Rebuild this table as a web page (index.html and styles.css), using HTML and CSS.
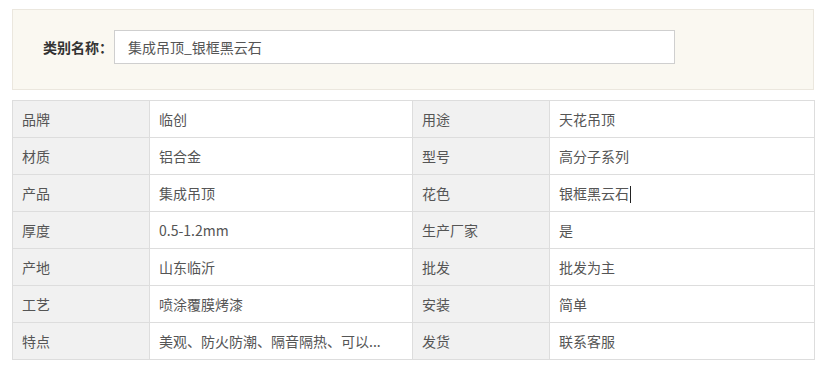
FILE: index.html
```html
<!DOCTYPE html>
<html lang="zh">
<head>
<meta charset="utf-8">
<link rel="stylesheet" href="styles.css">
</head>
<body>
<div class="page">
  <div class="panel">
    <label class="panel-label">类别名称：</label>
    <div class="panel-input">集成吊顶_银框黑云石</div>
  </div>
  <table class="attrs">
    <colgroup>
      <col class="c-label"><col class="c-value"><col class="c-label"><col class="c-value2">
    </colgroup>
    <tr><td class="k">品牌</td><td class="v">临创</td><td class="k">用途</td><td class="v">天花吊顶</td></tr>
    <tr><td class="k">材质</td><td class="v">铝合金</td><td class="k">型号</td><td class="v">高分子系列</td></tr>
    <tr><td class="k">产品</td><td class="v">集成吊顶</td><td class="k">花色</td><td class="v">银框黑云石<span class="caret"></span></td></tr>
    <tr><td class="k">厚度</td><td class="v">0.5-1.2mm</td><td class="k">生产厂家</td><td class="v">是</td></tr>
    <tr><td class="k">产地</td><td class="v">山东临沂</td><td class="k">批发</td><td class="v">批发为主</td></tr>
    <tr><td class="k">工艺</td><td class="v">喷涂覆膜烤漆</td><td class="k">安装</td><td class="v">简单</td></tr>
    <tr><td class="k">特点</td><td class="v">美观、防火防潮、隔音隔热、可以...</td><td class="k">发货</td><td class="v">联系客服</td></tr>
  </table>
</div>
</body>
</html>
```

FILE: styles.css
```css
* { box-sizing: border-box; }
html, body { margin: 0; padding: 0; background: #fff; }
body {
  font-family: "Microsoft YaHei", "Noto Sans CJK SC", "Noto Sans", sans-serif;
  font-size: 14px;
  color: #444;
}
.page {
  padding: 9px 0 0 12px;
  width: 814px;
}
.panel {
  height: 81px;
  background: #faf8f1;
  border: 1px solid #ebe7de;
  display: flex;
  align-items: flex-start;
  padding: 20px 0 0 30px;
}
.panel-label {
  font-weight: bold;
  font-size: 14px;
  color: #333;
  width: 71px;
  line-height: 34px;
}
.panel-input {
  width: 561px;
  height: 34px;
  background: #fff;
  border: 1px solid #cfcfcf;
  padding: 0 13px;
  line-height: 32px;
  font-size: 14px;
  color: #555;
}
.attrs {
  margin-top: 10px;
  width: 802px;
  border-collapse: collapse;
  table-layout: fixed;
}
.c-label { width: 137px; }
.c-value { width: 263px; }
.c-value2 { width: 265px; }
.attrs td {
  border: 1px solid #dddddd;
  height: 37px;
  padding: 0 9px;
  vertical-align: middle;
  white-space: nowrap;
  overflow: hidden;
}
.attrs td.k { background: #f1f1f1; color: #555; }
.attrs td.v { background: #fff; color: #555; }
.caret {
  display: inline-block;
  width: 1px;
  height: 17px;
  background: #222;
  vertical-align: -4px;
  margin-left: 1px;
}
```
